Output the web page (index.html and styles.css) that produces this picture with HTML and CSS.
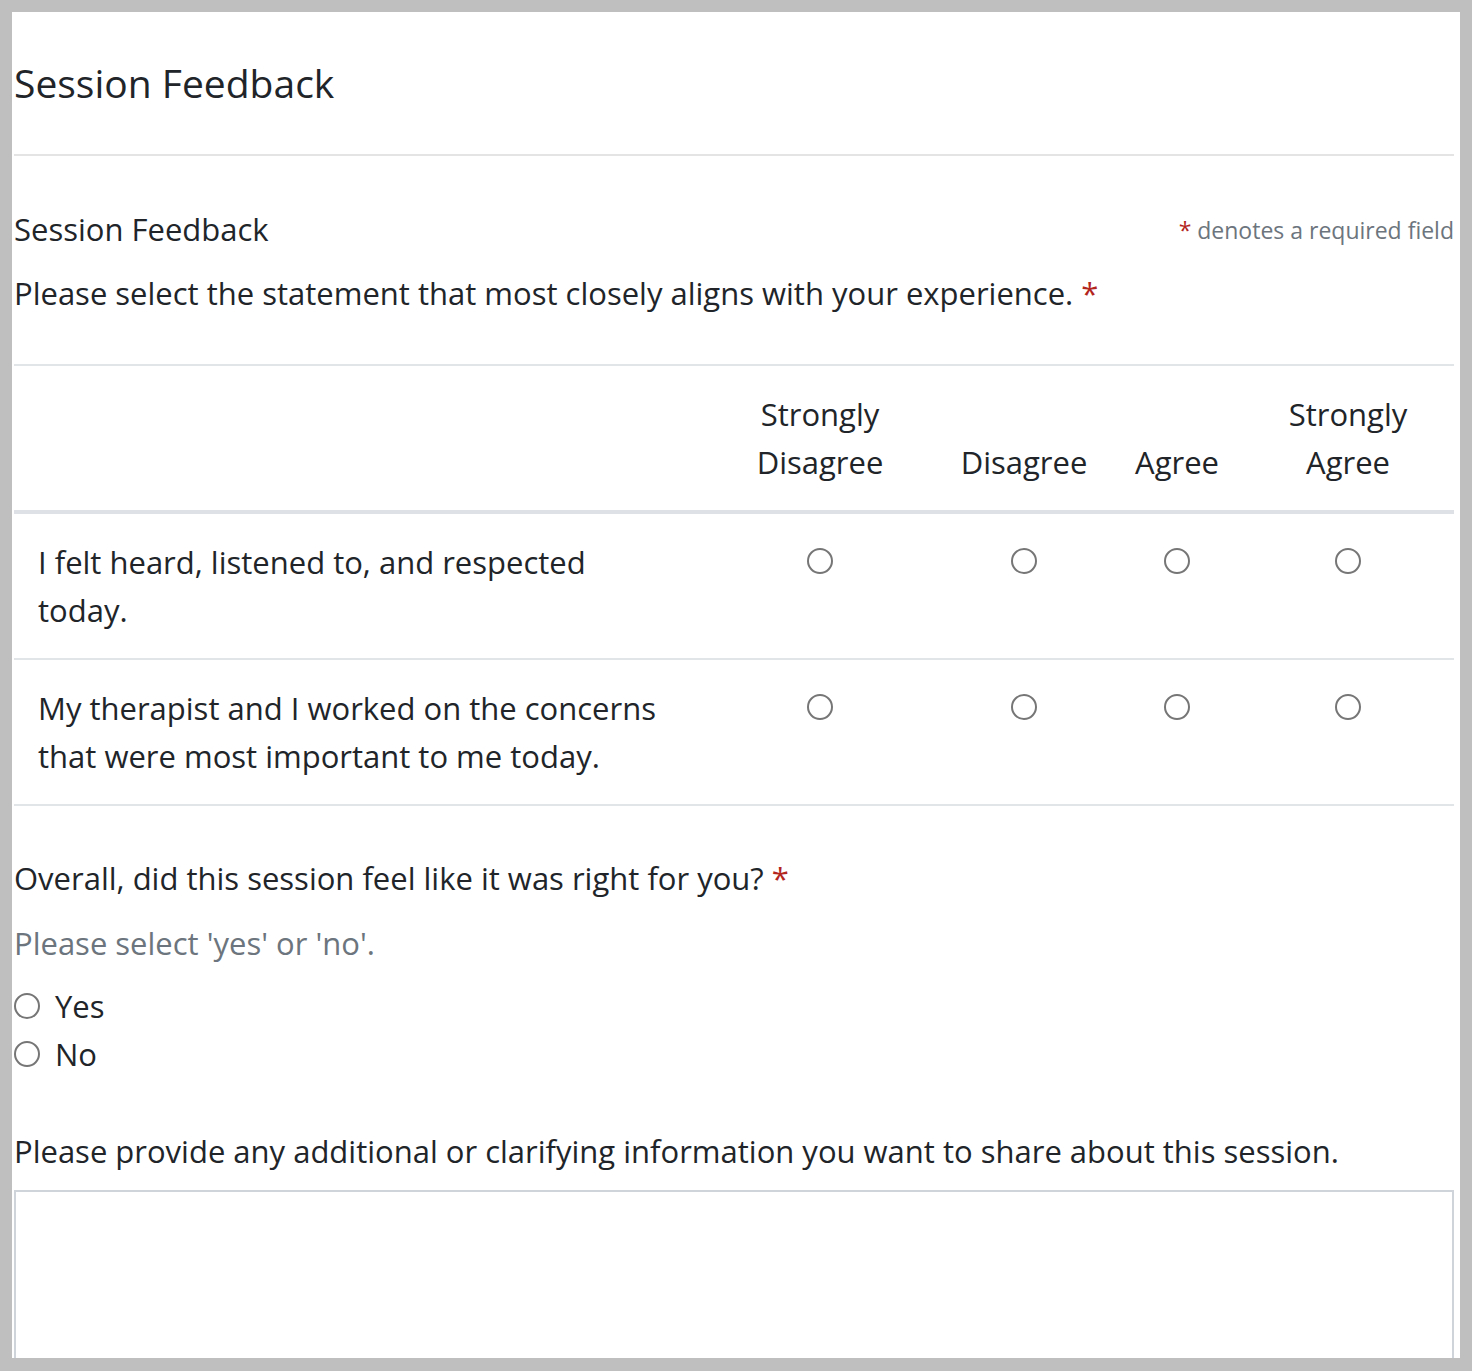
FILE: index.html
```html
<!DOCTYPE html>
<html lang="en">
<head>
<meta charset="utf-8">
<title>Session Feedback</title>
<link rel="stylesheet" href="styles.css">
</head>
<body>
<div class="frame">
  <div class="content">
    <h1 class="page-title">Session Feedback</h1>
    <div class="rule"></div>

    <div class="section-head">
      <h2 class="section-title">Session Feedback</h2>
      <div class="required-note"><span class="req">*</span> denotes a required field</div>
    </div>
    <p class="question">Please select the statement that most closely aligns with your experience. <span class="req">*</span></p>

    <div class="matrix">
      <div class="cell head"></div>
      <div class="cell head center">Strongly<br>Disagree</div>
      <div class="cell head center">Disagree</div>
      <div class="cell head center">Agree</div>
      <div class="cell head center">Strongly<br>Agree</div>

      <div class="cell label">I felt heard, listened to, and respected<br>today.</div>
      <div class="cell center"><span class="radio"></span></div>
      <div class="cell center"><span class="radio"></span></div>
      <div class="cell center"><span class="radio"></span></div>
      <div class="cell center"><span class="radio"></span></div>

      <div class="cell label">My therapist and I worked on the concerns<br>that were most important to me today.</div>
      <div class="cell center"><span class="radio"></span></div>
      <div class="cell center"><span class="radio"></span></div>
      <div class="cell center"><span class="radio"></span></div>
      <div class="cell center"><span class="radio"></span></div>
    </div>

    <p class="question q2">Overall, did this session feel like it was right for you? <span class="req">*</span></p>
    <p class="hint">Please select 'yes' or 'no'.</p>
    <div class="options">
      <label class="option"><span class="radio"></span><span>Yes</span></label>
      <label class="option"><span class="radio"></span><span>No</span></label>
    </div>

    <p class="question q3">Please provide any additional or clarifying information you want to share about this session.</p>
    <div class="textarea"></div>
  </div>
</div>
</body>
</html>
```
FILE: styles.css
```css
html, body {
  margin: 0;
  padding: 0;
}
body {
  background: #bfbfbf;
  font-family: "Open Sans", "Noto Sans", sans-serif;
  color: #212529;
  height: 1371px;
  overflow: hidden;
}
.frame {
  margin: 12px 0 0 12px;
  width: 1448px;
  height: 1346px;
  background: #ffffff;
  overflow: hidden;
}
.content {
  padding: 0 6px 0 2px;
}
.page-title {
  font-size: 39px;
  font-weight: 400;
  line-height: 52px;
  margin: 45px 0 45px;
}
.rule {
  height: 2px;
  background: #e4e4e4;
}
.section-head {
  display: flex;
  justify-content: space-between;
  align-items: baseline;
  margin-top: 49px;
  height: 48px;
  line-height: 48px;
}
.section-title {
  font-size: 31px;
  font-weight: 400;
  margin: 0;
}
.required-note {
  font-size: 23px;
  color: #6c757d;
  position: relative;
  top: -2px;
}
.req {
  color: #b3261e;
}
.question {
  font-size: 31px;
  line-height: 48px;
  margin: 16px 0 0;
}
.matrix {
  margin-top: 47px;
  display: grid;
  grid-template-columns: 690px 232px 176px 130px 212px;
  border-top: 2px solid #e2e5e8;
  font-size: 31px;
  line-height: 48px;
}
.cell {
  padding: 24px;
  display: flex;
  flex-direction: column;
}
.cell.head {
  border-bottom: 4px solid #dee2e6;
  justify-content: flex-end;
}
.cell.center {
  align-items: center;
  text-align: center;
}
.cell:nth-child(n+6) {
  border-bottom: 2px solid #e2e5e8;
}
.cell.center .radio {
  margin-top: 10px;
}
.radio {
  display: inline-block;
  box-sizing: border-box;
  width: 26px;
  height: 26px;
  border: 2px solid #767676;
  border-radius: 50%;
  background: #ffffff;
  flex: none;
}
.q2 {
  margin-top: 48px;
}
.hint {
  font-size: 31px;
  line-height: 48px;
  margin: 17px 0 0;
  color: #6c757d;
}
.options {
  margin-top: 15px;
  font-size: 31px;
  line-height: 48px;
  display: flex;
  flex-direction: column;
}
.option {
  display: flex;
  align-items: center;
  gap: 15px;
}
.q3 {
  margin-top: 49px;
}
.textarea {
  margin-top: 15px;
  height: 260px;
  border: 2px solid #ced4da;
  box-sizing: border-box;
}
```
